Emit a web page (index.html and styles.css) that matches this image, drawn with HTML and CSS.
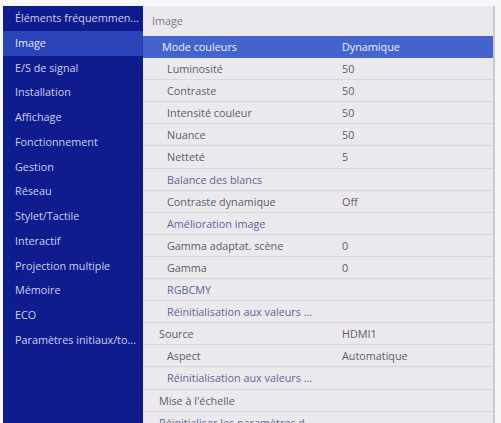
FILE: index.html
```html
<!DOCTYPE html>
<html lang="fr">
<head>
    <meta charset="UTF-8">
    <title>Image</title>
    <link rel="stylesheet" href="styles.css">
</head>
<body>

    <div class="menu-screen">
        <ul class="main-menu">
            <li class="main-item">Éléments fréquemmen...</li>
            <li class="main-item active">Image</li>
            <li class="main-item">E/S de signal</li>
            <li class="main-item">Installation</li>
            <li class="main-item">Affichage</li>
            <li class="main-item">Fonctionnement</li>
            <li class="main-item">Gestion</li>
            <li class="main-item">Réseau</li>
            <li class="main-item">Stylet/Tactile</li>
            <li class="main-item">Interactif</li>
            <li class="main-item">Projection multiple</li>
            <li class="main-item">Mémoire</li>
            <li class="main-item">ECO</li>
            <li class="main-item">Paramètres initiaux/to...</li>
        </ul>

        <div class="sub-menu">
            <div class="sub-title">Image</div>
            <div class="sub-row selected lvl1"><span class="label">Mode couleurs</span><span class="value">Dynamique</span></div>
            <div class="sub-row lvl2"><span class="label">Luminosité</span><span class="value">50</span></div>
            <div class="sub-row lvl2"><span class="label">Contraste</span><span class="value">50</span></div>
            <div class="sub-row lvl2"><span class="label">Intensité couleur</span><span class="value">50</span></div>
            <div class="sub-row lvl2"><span class="label">Nuance</span><span class="value">50</span></div>
            <div class="sub-row lvl2"><span class="label">Netteté</span><span class="value">5</span></div>
            <div class="sub-row lvl2 link"><span class="label">Balance des blancs</span><span class="value"></span></div>
            <div class="sub-row lvl2"><span class="label">Contraste dynamique</span><span class="value">Off</span></div>
            <div class="sub-row lvl2 link"><span class="label">Amélioration image</span><span class="value"></span></div>
            <div class="sub-row lvl2"><span class="label">Gamma adaptat. scène</span><span class="value">0</span></div>
            <div class="sub-row lvl2"><span class="label">Gamma</span><span class="value">0</span></div>
            <div class="sub-row lvl2 link"><span class="label">RGBCMY</span><span class="value"></span></div>
            <div class="sub-row lvl2 link"><span class="label">Réinitialisation aux valeurs ...</span><span class="value"></span></div>
            <div class="sub-row lvl1"><span class="label">Source</span><span class="value">HDMI1</span></div>
            <div class="sub-row lvl2"><span class="label">Aspect</span><span class="value">Automatique</span></div>
            <div class="sub-row lvl2 link"><span class="label">Réinitialisation aux valeurs ...</span><span class="value"></span></div>
            <div class="sub-row lvl1"><span class="label">Mise à l'échelle</span><span class="value"></span></div>
            <div class="sub-row lvl1 link"><span class="label">Réinitialiser les paramètres d...</span><span class="value"></span></div>
        </div>
    </div>

</body>
</html>
```

FILE: styles.css
```css
body {
    margin: 0;
    padding: 0;
    background: #f7f7f9;
    font-family: 'Open Sans', 'Noto Sans', sans-serif;
    font-size: 10.8px;
    overflow: hidden;
}

.menu-screen {
    display: flex;
    margin: 6px 6px 0 3px;
    height: 417px;
    overflow: hidden;
}

/* left column: top level categories */
.main-menu {
    list-style: none;
    margin: 0;
    padding: 0;
    width: 140px;
    flex-shrink: 0;
    background: #0f1c8e;
}

.main-item {
    height: 24.75px;
    line-height: 24.75px;
    padding-left: 12px;
    color: #c9d0f2;
    white-space: nowrap;
    overflow: hidden;
}

.main-item.active {
    background: #2a43b6;
    color: #e4e8fa;
}

/* right column: settings of the chosen category */
.sub-menu {
    flex: 1;
    background: #ebe9ed;
    border-right: 2px solid #c9c8cc;
}

.sub-title {
    height: 30px;
    line-height: 30px;
    padding-left: 9px;
    color: #7d7c86;
}

.sub-row {
    display: grid;
    grid-template-columns: 199px 1fr;
    height: 21.1px;
    line-height: 21.1px;
    border-bottom: 1px solid #d9d7dc;
    color: #5e5e68;
    white-space: nowrap;
}

.sub-row .label {
    overflow: hidden;
}

.lvl1 .label {
    padding-left: 16px;
}

.lvl2 .label {
    padding-left: 24px;
}

.sub-row.link {
    color: #5d6699;
}

.sub-row.selected {
    background: #4563cd;
    color: #eef0fb;
    border-bottom-color: #4563cd;
}

.sub-row.selected .label {
    padding-left: 19px;
}
```
